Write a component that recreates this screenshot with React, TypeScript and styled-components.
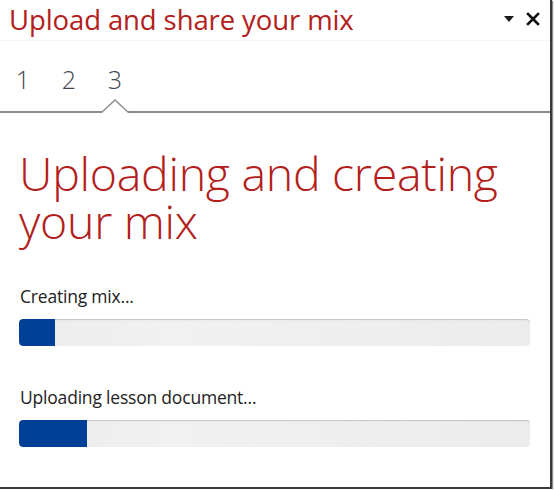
import React from "react";
import styled, { createGlobalStyle } from "styled-components";

const GlobalStyle = createGlobalStyle`
  html, body {
    margin: 0;
    padding: 0;
    background: #ffffff;
  }
  body {
    font-family: "Open Sans", "Noto Sans", sans-serif;
  }
`;

const steps = ["1", "2", "3"];
const activeStep = 2;

const tasks = [
  { label: "Creating mix...", progress: 7 },
  { label: "Uploading lesson document...", progress: 13.4 },
];

export default function App() {
  return (
    <>
      <GlobalStyle />
      <Pane>
        <TitleBar>
          <Title>Upload and share your mix</Title>
          <TitleButtons>
            <IconButton aria-label="Options">
              <svg width="10" height="6" viewBox="0 0 10 6">
                <path d="M0 0 H10 L5 6 Z" fill="#1a1a1a" />
              </svg>
            </IconButton>
            <IconButton aria-label="Close">
              <svg width="14" height="14" viewBox="0 0 14 14">
                <path
                  d="M2 2 L12 12 M12 2 L2 12"
                  stroke="#111"
                  strokeWidth="2.6"
                  strokeLinecap="square"
                />
              </svg>
            </IconButton>
          </TitleButtons>
        </TitleBar>
        <Steps>
          {steps.map((s, i) => (
            <Step key={s} active={i === activeStep}>
              {s}
            </Step>
          ))}
        </Steps>
        <Body>
          <Heading>Uploading and creating your mix</Heading>
          {tasks.map((t) => (
            <Task key={t.label}>
              <TaskLabel>{t.label}</TaskLabel>
              <Track>
                <Fill style={{ width: `${t.progress}%` }} />
              </Track>
            </Task>
          ))}
        </Body>
      </Pane>
    </>
  );
}

const Pane = styled.div`
  width: 550px;
  height: 487px;
  background: #fff;
  border-right: 2px solid #3a3a3a;
  border-bottom: 2px solid #3a3a3a;
  box-shadow: 1px 1px 1px #8a8a8a;
  display: flex;
  flex-direction: column;
  overflow: hidden;
`;

const TitleBar = styled.div`
  display: flex;
  align-items: flex-start;
  justify-content: space-between;
  height: 40px;
  padding: 0 10px 0 9px;
  border-bottom: 1px solid #f5f5f5;
`;

const Title = styled.div`
  color: #b3201b;
  font-size: 27.5px;
  line-height: 40px;
  letter-spacing: -0.1px;
`;

const TitleButtons = styled.div`
  display: flex;
  align-items: center;
  gap: 12px;
  height: 37px;
`;

const IconButton = styled.div`
  display: flex;
  align-items: center;
  justify-content: center;
`;

const Steps = styled.div`
  display: flex;
  padding: 23px 0 0 0;
  height: 72px;
  box-sizing: border-box;
  border-bottom: 2px solid #8c8c8c;
`;

const Step = styled.div<{ active?: boolean }>`
  position: relative;
  width: 46px;
  text-align: center;
  font-size: 25px;
  font-weight: 300;
  line-height: 30px;
  color: #3f4650;
  &::before,
  &::after {
    content: "";
    display: ${(p) => (p.active ? "block" : "none")};
    position: absolute;
    left: 50%;
    bottom: -2px;
    width: 0;
    height: 0;
    transform: translateX(-50%);
    border-style: solid;
    border-color: transparent;
    border-top-width: 0;
  }
  &::before {
    border-left-width: 15px;
    border-right-width: 15px;
    border-bottom-width: 14px;
    border-bottom-color: #8c8c8c;
  }
  &::after {
    border-left-width: 13px;
    border-right-width: 13px;
    border-bottom-width: 12px;
    border-bottom-color: #fff;
  }
`;

const Body = styled.div`
  padding: 36px 20px 0 19px;
`;

const Heading = styled.h1`
  margin: 0 0 40px 0;
  color: #b3201b;
  font-weight: 300;
  font-size: 46.5px;
  line-height: 48px;
  letter-spacing: -0.3px;
`;

const Task = styled.div`
  margin-bottom: 40px;
`;

const TaskLabel = styled.div`
  font-size: 17.5px;
  line-height: 22px;
  color: #222;
  margin-bottom: 12px;
  padding-left: 1px;
  letter-spacing: -0.2px;
`;

const Track = styled.div`
  height: 27px;
  border-radius: 4px;
  background: linear-gradient(90deg, #ececec, #f1f1f1 30%, #ececec);
  box-shadow: inset 0 2px 1px -1px #c4c4c4;
  overflow: hidden;
`;

const Fill = styled.div`
  height: 100%;
  background: #003f96;
  border-radius: 4px 0 0 4px;
`;
